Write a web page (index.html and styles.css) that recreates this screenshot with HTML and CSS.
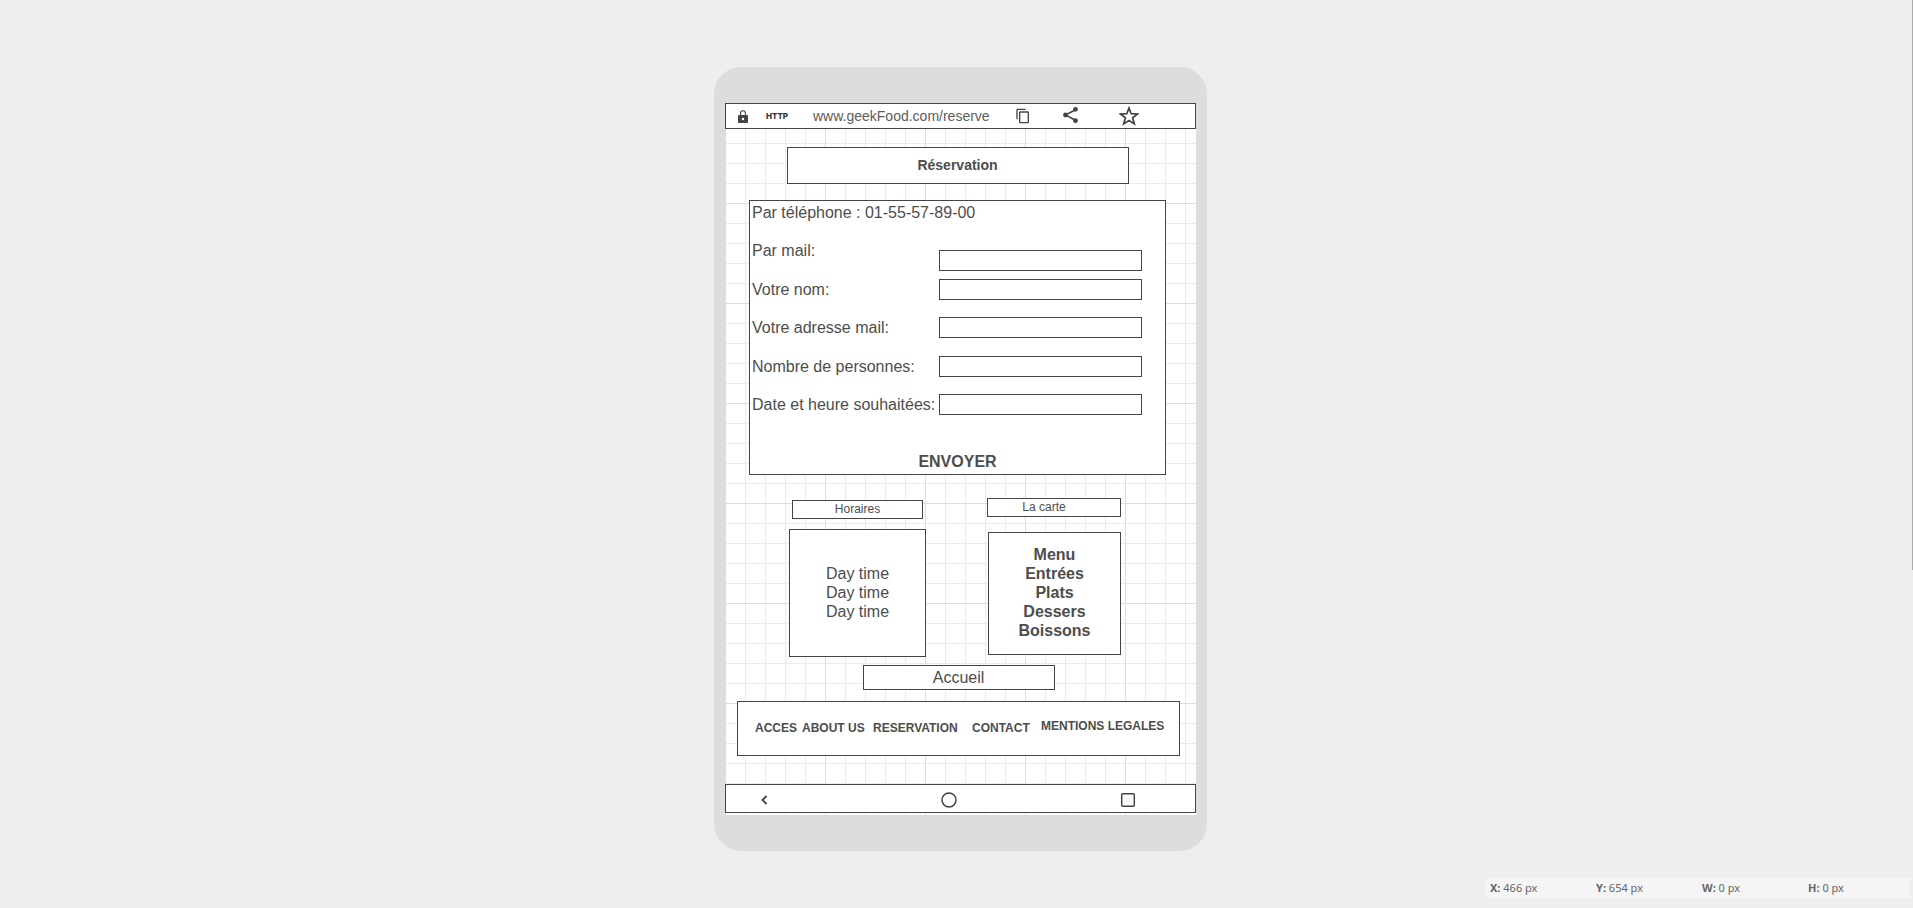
FILE: index.html
```html
<!DOCTYPE html>
<html lang="fr">
<head>
<meta charset="utf-8">
<meta name="viewport" content="width=device-width, initial-scale=1">
<title>Réservation</title>
<link rel="stylesheet" href="styles.css">
</head>
<body>
<div class="canvas">
  <div class="phone">
    <div class="screen">
      <header class="urlbar">
        <svg class="lock" viewBox="0 0 10 13" aria-hidden="true"><path fill-rule="evenodd" d="M2 5V3.200a3 3 0 0 1 6 0V5h1q1 0 1 1v6q0 1-1 1H1q-1 0-1-1V6q0-1 1-1zM3.100 5h3.800V3.200a1.900 1.900 0 0 0-3.800 0zM5 7.800a1.200 1.200 0 1 0 0 2.400 1.200 1.200 0 0 0 0-2.400z"/></svg>
        <span class="scheme">HTTP</span>
        <span class="address">www.geekFood.com/reserve</span>
        <button class="tool copy" type="button" aria-label="Copier"><svg width="16" height="16" viewBox="0 0 24 24"><path d="M16 1H4c-1.100 0-2 .9-2 2v14h2V3h12zm3 4H8c-1.100 0-2 .9-2 2v14c0 1.100.9 2 2 2h11c1.100 0 2-.9 2-2V7c0-1.100-.9-2-2-2zm0 16H8V7h11z"/></svg></button>
        <button class="tool share" type="button" aria-label="Partager"><svg width="17" height="18" viewBox="0 0 17 18"><path d="M14 3.500L3.500 9 14 14.500" fill="none" stroke="#444" stroke-width="1.500"/><circle cx="13.500" cy="3.300" r="2.400"/><circle cx="3.500" cy="9" r="2.400"/><circle cx="13.500" cy="14.700" r="2.400"/></svg></button>
        <button class="tool star" type="button" aria-label="Favori"><svg width="20" height="20" viewBox="0 0 20 20"><path d="M10 2l2.200 5.700 6.300.3-4.900 3.800 1.700 6.100L10 14.500l-5.300 3.400 1.700-6.100L1.500 8l6.300-.3z" fill="none" stroke="#444" stroke-width="1.700"/></svg></button>
      </header>

      <main class="page">
        <h1 class="box title">Réservation</h1>

        <form class="box booking">
          <p class="phone-line">Par téléphone : 01-55-57-89-00</p>
          <div class="fields">
            <label for="mail">Par mail:</label><input class="low" id="mail" type="text">
            <label for="nom">Votre nom:</label><input id="nom" type="text">
            <label for="adresse">Votre adresse mail:</label><input id="adresse" type="text">
            <label for="nombre">Nombre de personnes:</label><input id="nombre" type="text">
            <label for="date">Date et heure souhaitées:</label><input id="date" type="text">
          </div>
          <button class="send" type="button">ENVOYER</button>
        </form>

        <div class="infos">
          <section class="info hours">
            <h2 class="box tag">Horaires</h2>
            <div class="box panel">
              <p>Day time</p>
              <p>Day time</p>
              <p>Day time</p>
            </div>
          </section>
          <section class="info menu">
            <h2 class="box tag">La carte</h2>
            <ul class="box panel">
              <li>Menu</li>
              <li>Entrées</li>
              <li>Plats</li>
              <li>Dessers</li>
              <li>Boissons</li>
            </ul>
          </section>
        </div>

        <a class="box home" href="#">Accueil</a>

        <nav class="box links">
          <a class="acces" href="#">ACCES</a>
          <a class="about" href="#">ABOUT US</a>
          <a class="reservation" href="#">RESERVATION</a>
          <a class="contact" href="#">CONTACT</a>
          <a class="legal" href="#">MENTIONS LEGALES</a>
        </nav>
      </main>

      <footer class="system">
        <button type="button" aria-label="Retour"><svg width="18" height="12" viewBox="0 0 18 12"><path d="M7.500 2L3.500 6l4 4" fill="none" stroke="#444" stroke-width="1.800"/></svg></button>
        <button type="button" aria-label="Accueil système"><svg width="16" height="16" viewBox="0 0 16 16"><circle cx="8" cy="8" r="7" fill="none" stroke="#444" stroke-width="1.500"/></svg></button>
        <button type="button" aria-label="Applications"><svg width="16" height="16" viewBox="0 0 16 16"><rect x="1.700" y="1.700" width="12.600" height="12.600" rx="1" fill="none" stroke="#444" stroke-width="1.500"/></svg></button>
      </footer>
    </div>
  </div>
</div>

<div class="status">
  <span><b>X:</b> 466 px</span>
  <span><b>Y:</b> 654 px</span>
  <span><b>W:</b> 0 px</span>
  <span><b>H:</b> 0 px</span>
</div>
<div class="scroll-thumb"></div>
</body>
</html>
```
FILE: styles.css
```css
* { box-sizing: border-box; }

body {
  margin: 0;
  min-height: 100vh;
  background: #eee;
  color: #4d4d4d;
  font: 16px/19px "Liberation Sans", Arial, sans-serif;
}

h1, h2, p, ul { margin: 0; padding: 0; }
ul { list-style: none; }
a { color: inherit; text-decoration: none; }
svg { display: block; fill: #444; }
button {
  padding: 0;
  border: 0;
  background: none;
  color: inherit;
  font: inherit;
}

.canvas {
  display: flex;
  justify-content: center;
  padding: 67px 0 57px 8px;
}

.phone {
  width: 493px;
  max-width: 100%;
  padding: 36px 11px;
  border-radius: 27px;
  background: #ddd;
}

/* Drawing surface: 20px grid with a stronger line every 100px */
.screen {
  padding-bottom: 2px;
  background-color: #fff;
  background-image:
    linear-gradient(#ddd 1px, transparent 1px),
    linear-gradient(90deg, #ddd 1px, transparent 1px),
    linear-gradient(#ebebeb 1px, transparent 1px),
    linear-gradient(90deg, #ebebeb 1px, transparent 1px);
  background-size: 100px 100px, 100px 100px, 20px 20px, 20px 20px;
}

.box, .urlbar, .system {
  border: 1px solid #444;
  background: #fff;
}

.urlbar {
  display: flex;
  align-items: center;
  height: 26px;
  padding-left: 12px;
}
.lock { width: 10px; height: 13px; }
.scheme {
  width: 47px;
  margin-left: 18px;
  color: #333;
  font: 800 8px/12px Inter, sans-serif;
}
.address { width: 202px; font-size: 14px; color: #5c5c5c; }
.share { margin: 0 0 3px 31px; }
.star { margin-left: 40px; }

.page {
  display: flex;
  flex-direction: column;
  align-items: center;
  padding: 18px 6px 28px 0;
}

.title {
  width: 342px;
  font-size: 14px;
  line-height: 35px;
  text-align: center;
}

.booking {
  display: flex;
  flex-direction: column;
  width: 417px;
  height: 275px;
  margin-top: 16px;
  padding: 2px 2px 3px;
}
.fields {
  display: grid;
  grid-template-columns: 187px 203px;
  grid-template-rows: 38px 40px 37px 40px 37px;
  align-items: center;
  margin-top: 9px;
}
.fields label { white-space: nowrap; }
.fields input {
  height: 21px;
  padding: 0 4px;
  border: 1px solid #444;
  border-radius: 0;
  background: #fff;
  font: inherit;
}
.fields .low { margin-top: 20px; }
.send {
  margin-top: auto;
  font-weight: bold;
}

.infos {
  display: flex;
  justify-content: space-between;
  width: 332px;
  margin: 23px 5px 0 0;
}
.info { display: flex; flex-direction: column; }
.hours { align-items: center; width: 137px; padding-top: 2px; }
.menu { align-items: flex-end; width: 134px; }
.tag {
  width: 100%;
  font-size: 12px;
  font-weight: normal;
  line-height: 17px;
  text-align: center;
}
.hours .tag { width: 131px; }
.menu .tag { padding-right: 20px; }
.panel {
  display: flex;
  flex-direction: column;
  justify-content: center;
  padding-bottom: 2px;
  text-align: center;
}
.hours .panel { width: 137px; height: 128px; margin-top: 10px; }
.menu .panel { width: 133px; height: 123px; margin-top: 15px; font-weight: bold; }

.home {
  width: 192px;
  margin: 8px 0 0 2px;
  line-height: 23px;
  text-align: center;
}

.links {
  display: flex;
  align-items: center;
  width: 443px;
  height: 55px;
  margin: 11px 0 0 2px;
  padding-left: 17px;
  font-size: 12px;
  font-weight: bold;
  white-space: nowrap;
}
.acces { width: 47px; }
.about { width: 71px; }
.reservation { width: 99px; }
.contact { width: 69px; }
.legal { padding-bottom: 4px; }

.system {
  display: flex;
  align-items: center;
  justify-content: space-between;
  height: 29px;
  padding: 2px 59px 0 33px;
}

.status {
  position: fixed;
  right: 3px;
  bottom: 10px;
  display: grid;
  grid-template-columns: repeat(4, 106px);
  background: #f5f5f5;
  color: #666;
  font: 11px/20px "Noto Sans", sans-serif;
}
.status span { padding-left: 4px; }

.scroll-thumb {
  position: fixed;
  top: 0;
  right: 0;
  width: 1px;
  height: 570px;
  background: #aaa;
}
```
